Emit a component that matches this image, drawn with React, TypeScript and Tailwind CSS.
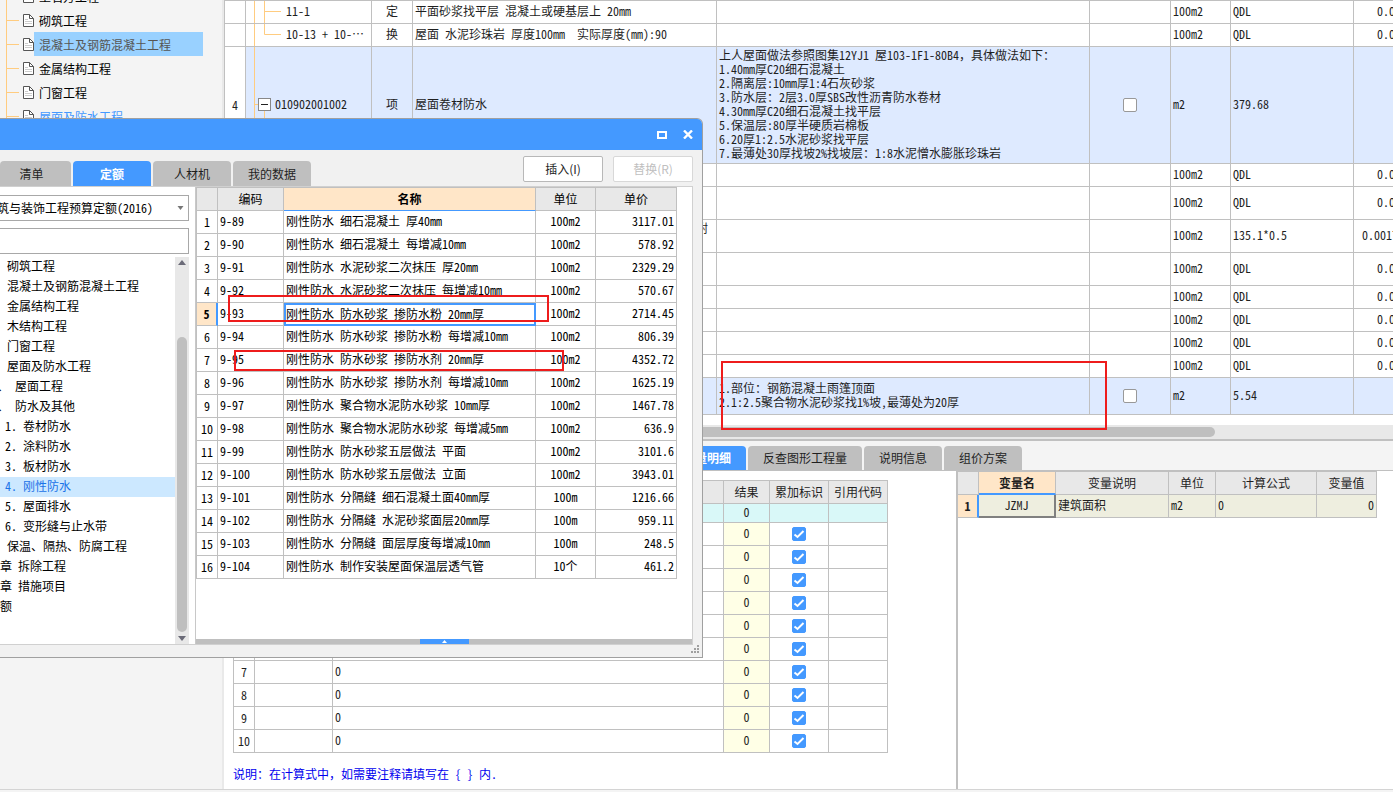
import React, { useState } from 'react';
import { clsx } from 'clsx';

const chapters = ['土石方工程', '砌筑工程', '混凝土及钢筋混凝土工程', '金属结构工程', '门窗工程', '屋面及防水工程'];

interface BillRow {
  kind?: 'child' | 'last' | 'item';
  no?: string;
  code?: string;
  type?: string;
  name?: string;
  nameClass?: string;
  spec?: string;
  unit: string;
  expr: string;
  qty?: string;
  height: string;
}

const billRows: BillRow[] = [
  { kind: 'child', code: '11-1', type: '定', name: '平面砂浆找平层 混凝土或硬基层上 20mm', unit: '100m2', expr: 'QDL', qty: '0.00', height: 'h-[23px]' },
  { kind: 'last', code: '10-13 + 10-⋯', type: '换', name: '屋面 水泥珍珠岩 厚度100mm  实际厚度(mm):90', unit: '100m2', expr: 'QDL', qty: '0.00', height: 'h-[23px]' },
  {
    kind: 'item',
    no: '4',
    code: '010902001002',
    type: '项',
    name: '屋面卷材防水',
    spec: `上人屋面做法参照图集12YJ1 屋103-1F1-80B4，具体做法如下：
1.40mm厚C20细石混凝土
2.隔离层:10mm厚1:4石灰砂浆
3.防水层：2层3.0厚SBS改性沥青防水卷材
4.30mm厚C20细石混凝土找平层
5.保温层:80厚半硬质岩棉板
6.20厚1:2.5水泥砂浆找平层
7.最薄处30厚找坡2%找坡层：1:8水泥憎水膨胀珍珠岩`,
    unit: 'm2',
    expr: '379.68',
    height: 'h-[117px]',
  },
  { unit: '100m2', expr: 'QDL', qty: '0.00', height: 'h-[23px]' },
  { unit: '100m2', expr: 'QDL', qty: '0.00', height: 'h-[33px]' },
  { name: '附', nameClass: 'pr-2 text-right align-top', unit: '100m2', expr: '135.1*0.5', qty: '0.0017', height: 'h-[33px]' },
  { unit: '100m2', expr: 'QDL', qty: '0.00', height: 'h-[33px]' },
  { unit: '100m2', expr: 'QDL', qty: '0.00', height: 'h-[23px]' },
  { unit: '100m2', expr: 'QDL', qty: '0.00', height: 'h-[23px]' },
  { unit: '100m2', expr: 'QDL', qty: '0.00', height: 'h-[23px]' },
  { unit: '100m2', expr: 'QDL', qty: '0.00', height: 'h-[23px]' },
  {
    kind: 'item',
    spec: '1.部位：钢筋混凝土雨篷顶面\n2.1:2.5聚合物水泥砂浆找1%坡,最薄处为20厚',
    unit: 'm2',
    expr: '5.54',
    height: 'h-[37px]',
  },
];

const quotaTree = [
  { label: '砌筑工程', indent: 'pl-[7px]' },
  { label: '混凝土及钢筋混凝土工程', indent: 'pl-[7px]' },
  { label: '金属结构工程', indent: 'pl-[7px]' },
  { label: '木结构工程', indent: 'pl-[7px]' },
  { label: '门窗工程', indent: 'pl-[7px]' },
  { label: '屋面及防水工程', indent: 'pl-[7px]' },
  { label: '、 屋面工程', indent: '-ml-[3px]' },
  { label: '、 防水及其他', indent: '-ml-[3px]' },
  { label: '1. 卷材防水', indent: 'pl-[5px]' },
  { label: '2. 涂料防水', indent: 'pl-[5px]' },
  { label: '3. 板材防水', indent: 'pl-[5px]' },
  { label: '4. 刚性防水', indent: 'pl-[5px]' },
  { label: '5. 屋面排水', indent: 'pl-[5px]' },
  { label: '6. 变形缝与止水带', indent: 'pl-[5px]' },
  { label: '保温、隔热、防腐工程', indent: 'pl-[7px]' },
  { label: '章 拆除工程', indent: 'pl-0' },
  { label: '章 措施项目', indent: 'pl-0' },
  { label: '额', indent: 'pl-0' },
];

const quotas = [
  ['9-89', '刚性防水 细石混凝土 厚40mm', '100m2', '3117.01'],
  ['9-90', '刚性防水 细石混凝土 每增减10mm', '100m2', '578.92'],
  ['9-91', '刚性防水 水泥砂浆二次抹压 厚20mm', '100m2', '2329.29'],
  ['9-92', '刚性防水 水泥砂浆二次抹压 每增减10mm', '100m2', '570.67'],
  ['9-93', '刚性防水 防水砂浆 掺防水粉 20mm厚', '100m2', '2714.45'],
  ['9-94', '刚性防水 防水砂浆 掺防水粉 每增减10mm', '100m2', '806.39'],
  ['9-95', '刚性防水 防水砂浆 掺防水剂 20mm厚', '100m2', '4352.72'],
  ['9-96', '刚性防水 防水砂浆 掺防水剂 每增减10mm', '100m2', '1625.19'],
  ['9-97', '刚性防水 聚合物水泥防水砂浆 10mm厚', '100m2', '1467.78'],
  ['9-98', '刚性防水 聚合物水泥防水砂浆 每增减5mm', '100m2', '636.9'],
  ['9-99', '刚性防水 防水砂浆五层做法 平面', '100m2', '3101.6'],
  ['9-100', '刚性防水 防水砂浆五层做法 立面', '100m2', '3943.01'],
  ['9-101', '刚性防水 分隔缝 细石混凝土面40mm厚', '100m', '1216.66'],
  ['9-102', '刚性防水 分隔缝 水泥砂浆面层20mm厚', '100m', '959.11'],
  ['9-103', '刚性防水 分隔缝 面层厚度每增减10mm', '100m', '248.5'],
  ['9-104', '刚性防水 制作安装屋面保温层透气管', '10个', '461.2'],
];

const cell = 'border-r border-b border-[#c0c0c0] font-normal';
const grid = 'table-fixed border-separate border-spacing-0 [&_td]:pb-0.5';

function CheckBox({ label, defaultChecked = false }: { label: string; defaultChecked?: boolean }) {
  return (
    <label className="relative mx-auto mt-0.5 block size-[14px]">
      <input
        type="checkbox"
        aria-label={label}
        defaultChecked={defaultChecked}
        className="peer block size-[14px] appearance-none rounded-xs border border-[#999999] bg-white checked:border-[#4499ff] checked:bg-[#4499ff]"
      />
      <svg viewBox="0 0 14 14" className="pointer-events-none absolute inset-0 hidden size-[14px] peer-checked:block">
        <path d="M2.5 7.5 L5.5 10 L11.5 4" fill="none" stroke="#fff" strokeWidth="2" />
      </svg>
    </label>
  );
}

function PageIcon() {
  return (
    <svg width="11" height="13" viewBox="0 0 11 13" className="shrink-0">
      <path d="M0.5 0.5 H6.5 L10.5 4.5 V12.5 H0.5 Z" fill="#fff" stroke="#555" />
      <path d="M6.5 0.5 V4.5 H10.5" fill="none" stroke="#555" />
      <path d="M2 5.5 H5 M2 7.5 H9 M2 9.5 H9" stroke="#ccc" />
    </svg>
  );
}

function Sidebar() {
  const [selected, setSelected] = useState(2);
  return (
    <aside className="w-56 shrink-0 overflow-hidden border-r-2 border-[#e9e9e9] bg-[#f4f4f4]">
      <ul className="-mt-4 ml-1.5 border-l border-[#ffcc80]">
        {chapters.map((name, i) => (
          <li key={name} className="flex h-6 items-center">
            <span className="h-px w-3 shrink-0 bg-[#ffcc80]" />
            <span className="ml-1">
              <PageIcon />
            </span>
            <button
              onClick={() => setSelected(i)}
              className={clsx(
                'flex h-6 w-[169px] items-center pt-0.5 pl-[5px] text-left',
                i === selected ? 'bg-[#99d1ff] text-[#555555]' : i === 5 ? 'text-[#4499ff]' : 'text-black'
              )}
            >
              {name}
            </button>
          </li>
        ))}
      </ul>
    </aside>
  );
}

function TreeLines({ kind }: { kind: 'child' | 'last' }) {
  return (
    <svg width="40" height="23" className="absolute top-0 left-0" stroke="#ffcc80">
      <path d="M8.5 0 V23" />
      <path d={kind === 'child' ? 'M18.5 0 V23 M18.5 10.5 H35' : 'M18.5 0 V10.5 H35'} fill="none" />
    </svg>
  );
}

function ItemLines() {
  return (
    <svg width="40" height="117" className="absolute top-0 left-0">
      <path d="M8.5 0 V117 M8.5 57.5 H12 M18.5 64 V117" stroke="#ffcc80" />
      <rect x="12.5" y="51.5" width="12" height="12" fill="#fff" stroke="#888" />
      <path d="M15 57.5 H22" stroke="#222" />
    </svg>
  );
}

function BillTable() {
  return (
    <table className={clsx(grid, 'w-full border-t border-[#c0c0c0] bg-white')}>
      <colgroup>
        <col className="w-[22px]" />
        <col className="w-[126px]" />
        <col className="w-[41px]" />
        <col className="w-[304px]" />
        <col />
        <col className="w-[81px]" />
        <col className="w-[60px]" />
        <col className="w-[123px]" />
        <col className="w-[39px]" />
      </colgroup>
      <tbody>
        {billRows.map((row, i) => (
          <tr key={i} className={clsx(row.kind === 'item' && 'bg-[#deeaff]')}>
            <th className={clsx(cell, row.height, 'border-l bg-white')}>{row.no}</th>
            <td className={clsx(cell, 'relative overflow-hidden whitespace-nowrap', row.kind === 'item' ? 'pl-[29px]' : 'pl-10')}>
              {(row.kind === 'child' || row.kind === 'last') && <TreeLines kind={row.kind} />}
              {row.no && <ItemLines />}
              {row.code}
            </td>
            <td className={clsx(cell, 'text-center')}>{row.type}</td>
            <td className={clsx(cell, 'overflow-hidden whitespace-pre', row.nameClass ?? 'pl-0.5')}>{row.name}</td>
            <td className={clsx(cell, 'overflow-hidden pl-0.5 leading-[14px] whitespace-pre')}>{row.spec}</td>
            <td className={cell}>{row.kind === 'item' && <CheckBox label={row.expr} />}</td>
            <td className={clsx(cell, 'pl-0.5')}>{row.unit}</td>
            <td className={clsx(cell, 'pl-0.5')}>{row.expr}</td>
            <td className={clsx('overflow-hidden border-b border-[#c0c0c0] whitespace-nowrap', row.qty === '0.0017' ? 'pl-2' : 'pl-[23px]')}>{row.qty}</td>
          </tr>
        ))}
      </tbody>
    </table>
  );
}

const detailTabs = ['工程量明细', '反查图形工程量', '说明信息', '组价方案'];

function DetailTabs() {
  const [active, setActive] = useState(0);
  return (
    <div className="flex h-[30px] shrink-0 items-end gap-0.5 border-b border-[#c0c0c0] bg-[#f4f4f4] pl-[432px]">
      {detailTabs.map((tab, i) => (
        <button
          key={tab}
          onClick={() => setActive(i)}
          className={clsx('h-6 rounded-t-sm px-[15px] whitespace-nowrap', active === i ? 'bg-[#4499ff] font-bold text-white' : 'bg-[#bfbfbf]')}
        >
          {tab}
        </button>
      ))}
    </div>
  );
}

function DetailTable() {
  return (
    <section className="w-[734px] shrink-0 border-r-2 border-[#c0c0c0] pt-[9px] pl-[9px]">
      <table className={clsx(grid, 'w-[655px] border-t border-[#c0c0c0]')}>
        <colgroup>
          <col className="w-[22px]" />
          <col className="w-[78px]" />
          <col className="w-[391px]" />
          <col className="w-[46px]" />
          <col className="w-[59px]" />
          <col className="w-[59px]" />
        </colgroup>
        <thead>
          <tr className="bg-[#e8e8e8]">
            <th className={clsx(cell, 'h-[23px] border-l')} />
            <th className={cell} />
            <th className={cell} />
            <th className={cell}>结果</th>
            <th className={cell}>累加标识</th>
            <th className={cell}>引用代码</th>
          </tr>
        </thead>
        <tbody>
          <tr className="bg-[#d9f8f8]">
            <td className={clsx(cell, 'h-[19px] border-l')} />
            <td className={cell} />
            <td className={cell} />
            <td className={clsx(cell, 'text-center')}>0</td>
            <td className={cell} />
            <td className={cell} />
          </tr>
          {Array.from({ length: 10 }, (_, i) => (
            <tr key={i}>
              <th className={clsx(cell, 'h-[23px] border-l')}>{i + 1}</th>
              <td className={cell} />
              <td className={clsx(cell, 'pl-0.5')}>0</td>
              <td className={clsx(cell, 'bg-[#ffffe6] text-center')}>0</td>
              <td className={cell}>
                <CheckBox label={`累加标识 ${i + 1}`} defaultChecked />
              </td>
              <td className={cell} />
            </tr>
          ))}
        </tbody>
      </table>
      <p className="mt-[13px] text-[#0000ee]">说明：在计算式中，如需要注释请填写在 {'{ }'} 内.</p>
    </section>
  );
}

function VariableTable() {
  return (
    <section className="min-w-0 flex-1 overflow-hidden">
      <table className={clsx(grid, 'w-[419px] border-t border-[#c0c0c0]')}>
        <colgroup>
          <col className="w-[21px]" />
          <col className="w-[77px]" />
          <col className="w-[113px]" />
          <col className="w-[47px]" />
          <col className="w-[101px]" />
          <col className="w-[60px]" />
        </colgroup>
        <thead>
          <tr className="bg-[#e8e8e8]">
            <th className={clsx(cell, 'h-[23px]')} />
            <th className="border-r border-b-2 border-r-[#c0c0c0] border-b-[#4499ff] bg-[#ffe6c8] font-bold">变量名</th>
            <th className={cell}>变量说明</th>
            <th className={cell}>单位</th>
            <th className={cell}>计算公式</th>
            <th className={cell}>变量值</th>
          </tr>
        </thead>
        <tbody>
          <tr className="bg-[#eeeedf]">
            <th className="h-[23px] border-r-2 border-b border-r-[#4499ff] border-b-[#c0c0c0] bg-[#ffe6c8] font-bold">1</th>
            <td className="border-r-2 border-b-2 border-[#808080] text-center">JZMJ</td>
            <td className={clsx(cell, 'pl-0.5')}>建筑面积</td>
            <td className={clsx(cell, 'pl-0.5')}>m2</td>
            <td className={clsx(cell, 'pl-0.5')}>0</td>
            <td className={clsx(cell, 'pr-0.5 text-right')}>0</td>
          </tr>
        </tbody>
      </table>
    </section>
  );
}

function QuotaTree() {
  const [selected, setSelected] = useState('4. 刚性防水');
  return (
    <div className="flex w-[195px] shrink-0 flex-col overflow-hidden pt-2 text-black">
      <div className="relative -ml-4 w-[205px]">
        <select aria-label="定额库" className="h-[26px] w-full appearance-none border border-[#a8a8a8] bg-white">
          <option>建筑与装饰工程预算定额(2016)</option>
        </select>
        <svg width="7" height="4" className="pointer-events-none absolute top-[11px] right-[5px]">
          <path d="M0.5 0 H6.5 L3.5 4 Z" fill="#777" />
        </svg>
      </div>
      <input aria-label="搜索" className="mt-[7px] h-[26px] w-[189px] border border-l-0 border-[#a8a8a8] bg-white px-1 outline-none" />
      <div className="mt-[3px] flex min-h-0 flex-1">
        <ul className="min-w-0 flex-1">
          {quotaTree.map(({ label, indent }) => (
            <li key={label} className={clsx('h-5', selected === label && 'bg-[#cce8ff] text-[#1a73e8]')}>
              <button onClick={() => setSelected(label)} className={clsx('block h-5 w-full pb-0.5 text-left whitespace-nowrap', indent)}>
                {label}
              </button>
            </li>
          ))}
        </ul>
        <div className="mr-1.5 flex w-[14px] flex-col items-center bg-[#e8e8e8] py-[3px]">
          <svg width="8" height="5">
            <path d="M0 5 L4 0 L8 5 Z" fill="#6b6b78" />
          </svg>
          <div className="mt-[72px] mb-1 w-2.5 flex-1 rounded-full bg-[#bfbfbf]" />
          <svg width="8" height="5">
            <path d="M0 0 L4 5 L8 0 Z" fill="#6b6b78" />
          </svg>
        </div>
      </div>
    </div>
  );
}

function QuotaTable() {
  const [selected, setSelected] = useState(4);
  return (
    <div className="flex min-w-0 flex-1 flex-col border-l border-[#c8c8c8]">
      <table className={clsx(grid, 'w-[481px] border-t border-[#c0c0c0] text-black')}>
        <colgroup>
          <col className="w-[22px]" />
          <col className="w-[66px]" />
          <col className="w-[252px]" />
          <col className="w-[60px]" />
          <col className="w-[81px]" />
        </colgroup>
        <thead>
          <tr className="bg-[#e8e8e8]">
            <th className={clsx(cell, 'h-[23px] border-l')} />
            <th className={cell}>编码</th>
            <th className="border-r border-b border-r-[#c0c0c0] border-b-[#4499ff] bg-[#ffe6c8] font-bold">名称</th>
            <th className={cell}>单位</th>
            <th className={cell}>单价</th>
          </tr>
        </thead>
        <tbody>
          {quotas.map(([code, name, unit, price], i) => (
            <tr key={code} onClick={() => setSelected(i)}>
              <th
                className={clsx(
                  'h-[23px] border-b border-l border-[#c0c0c0]',
                  selected === i ? 'border-r-2 border-r-[#4499ff] bg-[#ffe6c8] font-bold' : 'border-r font-normal'
                )}
              >
                {i + 1}
              </th>
              <td className={clsx(cell, 'pl-0.5')}>{code}</td>
              <td className={clsx('whitespace-nowrap', selected === i ? 'border-2 border-[#4499ff]' : 'border-r border-b border-[#c0c0c0] pl-0.5')}>{name}</td>
              <td className={clsx(cell, 'text-center')}>{unit}</td>
              <td className={clsx(cell, 'pr-0.5 text-right')}>{price}</td>
            </tr>
          ))}
        </tbody>
      </table>
      <div className="mt-auto flex h-[5px] justify-center bg-[#bfbfbf]">
        <button aria-label="展开" className="flex w-[49px] items-center justify-center bg-[#4499ff]">
          <svg width="5" height="3">
            <path d="M0 3 L2.5 0 L5 3 Z" fill="#fff" />
          </svg>
        </button>
      </div>
    </div>
  );
}

const quotaTabs = ['清单', '定额', '人材机', '我的数据'];

function QuotaDialog() {
  const [active, setActive] = useState(1);
  return (
    <div
      role="dialog"
      aria-label="查询"
      className="absolute top-[118px] left-0 flex h-[540px] w-[703px] flex-col overflow-hidden rounded-tr-md border border-l-0 border-[#a0a0a0] bg-[#f1f1f1]"
    >
      <div className="flex h-[31px] shrink-0 items-center justify-end gap-4 bg-[#4499ff] pr-[9px]">
        <button aria-label="最大化">
          <svg width="10" height="8" className="block">
            <rect x="1" y="1" width="8" height="6" fill="none" stroke="#fff" strokeWidth="2" />
          </svg>
        </button>
        <button aria-label="关闭">
          <svg width="10" height="9" className="block">
            <path d="M1 0.5 L9 8.5 M9 0.5 L1 8.5" stroke="#fff" strokeWidth="2.4" />
          </svg>
        </button>
      </div>
      <div className="flex h-9 shrink-0 items-end">
        <div className="flex gap-0.5">
          {quotaTabs.map((tab, i) => (
            <button
              key={tab}
              onClick={() => setActive(i)}
              className={clsx('h-[25px] rounded-t-sm', i === 0 ? 'w-[71px] pr-2' : 'w-[78px]', active === i ? 'bg-[#4499ff] font-bold text-white' : 'bg-[#bfbfbf]')}
            >
              {tab}
            </button>
          ))}
        </div>
        <div className="mr-[9px] mb-1 ml-auto flex gap-2.5">
          <button className="h-[26px] w-20 rounded-xs border border-[#b8b8b8] bg-white font-[Noto_Sans_CJK_SC,sans-serif]">插入(I)</button>
          <button disabled className="h-[26px] w-20 rounded-xs border border-[#d8d8d8] bg-white font-[Noto_Sans_CJK_SC,sans-serif] text-[#bfbfbf]">
            替换(R)
          </button>
        </div>
      </div>
      <div className="mr-[9px] flex min-h-0 flex-1 border-t border-r border-b border-[#d0d0d0] bg-white">
        <QuotaTree />
        <QuotaTable />
      </div>
      <div className="flex h-3 shrink-0 items-start justify-end pr-[3px]">
        <svg width="8" height="8" fill="#a0a0a0">
          <path d="M6 0h2v2h-2z M3 3h2v2h-2z M6 3h2v2h-2z M0 6h2v2h-2z M3 6h2v2h-2z M6 6h2v2h-2z" />
        </svg>
      </div>
    </div>
  );
}

export default function App() {
  return (
    <div className="relative flex h-screen flex-col overflow-hidden bg-white font-['Noto_Sans_Mono_CJK_SC','Noto_Sans_CJK_SC',monospace] text-xs text-[#1f1f1f]">
      <div className="flex min-h-0 flex-1">
        <Sidebar />
        <main className="flex min-w-0 flex-1 flex-col">
          <BillTable />
          <div className="mt-2.5 h-[14px] shrink-0 bg-[#e8e8e8] pt-0.5 pr-[178px]">
            <div className="h-2.5 rounded-full bg-[#bfbfbf]" />
          </div>
          <div className="h-0.5 shrink-0 bg-[#c0c0c0]" />
          <DetailTabs />
          <div className="flex min-h-0 flex-1">
            <DetailTable />
            <VariableTable />
          </div>
        </main>
      </div>
      <div className="h-[3px] shrink-0 border-t border-[#d4d4d4] bg-[#f4f4f4]" />

      <QuotaDialog />

      {/* red review marks */}
      <div className="pointer-events-none absolute top-[295px] left-[228px] h-[27px] w-[321px] border-2 border-[#ee1c1c]" />
      <div className="pointer-events-none absolute top-[350px] left-[234px] h-[21px] w-[330px] border-2 border-[#ee1c1c]" />
      <div className="pointer-events-none absolute top-[361px] left-[721px] h-[69px] w-[386px] border-2 border-[#ee1c1c]" />
    </div>
  );
}
